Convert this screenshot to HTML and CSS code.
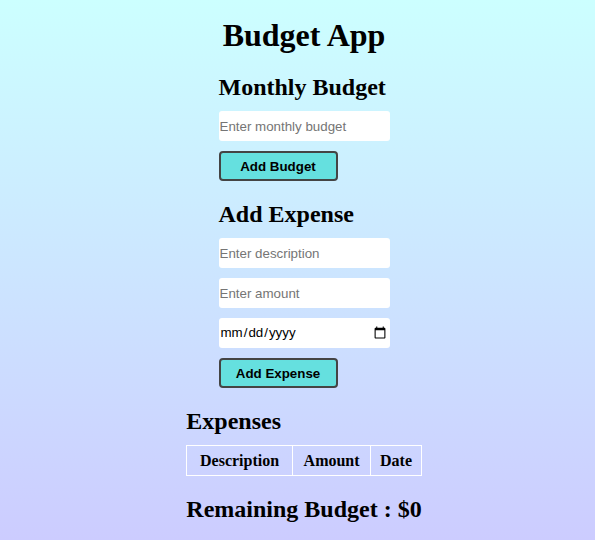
FILE: index.html
```html
<!DOCTYPE html>
<html lang="en">
<head>
<meta charset="utf-8">
<title>Budget App</title>
<link rel="stylesheet" href="styles.css">
</head>
<body>
<main class="app">
  <h1 class="title">Budget App</h1>
  <div class="forms">
    <section class="block">
      <h2 class="heading">Monthly Budget</h2>
      <input class="field" type="number" placeholder="Enter monthly budget">
      <button class="btn" type="button">Add Budget</button>
    </section>
    <section class="block">
      <h2 class="heading">Add Expense</h2>
      <input class="field" type="text" placeholder="Enter description">
      <input class="field" type="number" placeholder="Enter amount">
      <input class="field" type="date">
      <button class="btn" type="button">Add Expense</button>
    </section>
  </div>
  <div class="list">
    <section class="block">
      <h2 class="heading">Expenses</h2>
      <table class="table">
        <thead>
          <tr><th>Description</th><th>Amount</th><th>Date</th></tr>
        </thead>
        <tbody></tbody>
      </table>
    </section>
    <h2 class="heading">Remaining Budget : $0</h2>
  </div>
</main>
</body>
</html>
```

FILE: styles.css
```css
html {
  height: 100%;
}
body {
  margin: 0;
  min-height: 100%;
  box-sizing: border-box;
  padding: 17px 0 0 13px;
  background: linear-gradient(to bottom, #ccffff, #ccccff);
  font-family: "Liberation Serif", "Times New Roman", serif;
  color: #000;
}
.app {
  display: flex;
  flex-direction: column;
  align-items: center;
  gap: 20px;
}
.title {
  margin: 0;
  font-size: 32px;
  font-weight: bold;
}
.forms,
.list {
  display: flex;
  flex-direction: column;
  gap: 20px;
}
.block {
  display: flex;
  flex-direction: column;
  align-items: flex-start;
  gap: 10px;
}
.heading {
  margin: 0;
  font-size: 24px;
  font-weight: bold;
}
.field {
  box-sizing: border-box;
  width: 171px;
  height: 30px;
  margin: 0;
  padding: 0 1px;
  border: none;
  border-radius: 3px;
  background: #fff;
  font-family: "Liberation Sans", Arial, sans-serif;
  font-size: 13.333px;
  color: #000;
  outline: none;
}
.field::placeholder {
  color: #757575;
}
.btn {
  box-sizing: border-box;
  width: 119px;
  height: 30px;
  margin: 0;
  padding: 0;
  border: 2px solid #444;
  border-radius: 4px;
  background: #65e0df;
  font-family: "Liberation Sans", Arial, sans-serif;
  font-size: 13.333px;
  font-weight: bold;
  color: #000;
}
.table {
  width: 100%;
  border-collapse: collapse;
}
.table th {
  border: 1px solid #fff;
  padding: 5px;
  height: 30px;
  box-sizing: border-box;
  font-size: 16px;
  font-weight: bold;
}
```
